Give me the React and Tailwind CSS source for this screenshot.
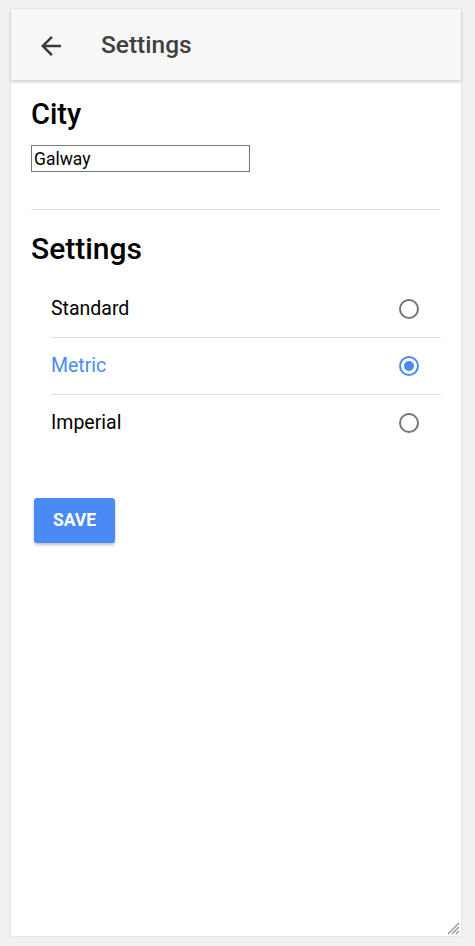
import { useState } from 'react'

const UNITS = ['Standard', 'Metric', 'Imperial']

function Radio({ checked }) {
  return (
    <span
      className={`flex h-[20px] w-[20px] items-center justify-center rounded-full border-2 ${
        checked ? 'border-[#4a8af4]' : 'border-[#757575]'
      }`}
    >
      {checked && <span className="h-[10px] w-[10px] rounded-full bg-[#4a8af4]" />}
    </span>
  )
}

export default function App() {
  const [city, setCity] = useState('Galway')
  const [unit, setUnit] = useState('Metric')

  return (
    <div className="min-h-[946px] bg-[#f1f1f3] pt-[9px] pl-[11px] font-['Roboto',sans-serif]">
      <div className="relative flex h-[927px] w-[450px] flex-col bg-white shadow-[0_0_2px_rgba(0,0,0,0.15)]">
        {/* Header */}
        <div className="flex h-[71px] items-center bg-[#f7f7f7] pt-[2px] shadow-[0_2px_3px_rgba(0,0,0,0.18)]">
          <button className="ml-[25px] flex h-[30px] w-[30px] items-center justify-center text-[#3a3a3a]">
            <svg width="30" height="30" viewBox="0 0 24 24" fill="currentColor">
              <path d="M20 11H7.83l5.59-5.59L12 4l-8 8 8 8 1.41-1.41L7.83 13H20v-2z" />
            </svg>
          </button>
          <h1 className="ml-[35px] text-[24.5px] font-medium text-[#404040]">Settings</h1>
        </div>

        <div className="px-[20px] pt-[16px]">
          <h2 className="text-[29px] leading-[36px] font-medium text-black">City</h2>
          <input
            value={city}
            onChange={e => setCity(e.target.value)}
            className="mt-[13px] h-[27px] w-[219px] border border-[#767676] px-[2px] text-[17.5px] text-black outline-none"
          />
          <div className="mt-[37px] mr-[1px] border-t border-[#e0e0e0]" />

          <h2 className="mt-[21px] text-[30px] leading-[36px] font-medium text-black">Settings</h2>

          <div className="mt-[13px] pl-[20px]">
            {UNITS.map((u, i) => (
              <div
                key={u}
                onClick={() => setUnit(u)}
                className={`flex h-[57px] cursor-pointer items-center justify-between pr-[22px] ${
                  i > 0 ? 'border-t border-[#e0e0e0]' : ''
                }`}
              >
                <span className={`text-[19.5px] ${unit === u ? 'text-[#4a8af4]' : 'text-black'}`}>{u}</span>
                <Radio checked={unit === u} />
              </div>
            ))}
          </div>

          <button className="mt-[47px] ml-[3px] h-[45px] w-[81px] rounded-[3px] bg-[#4a8af4] text-[17.5px] font-bold text-white shadow-[0_2px_3px_rgba(0,0,0,0.25)]">
            SAVE
          </button>
        </div>

        {/* resize handle */}
        <svg className="absolute right-[1px] bottom-[1px]" width="16" height="16" viewBox="0 0 16 16">
          <path d="M15 4L4 15M15 8L8 15M15 12L12 15" stroke="#8f8f8f" strokeWidth="1.2" />
        </svg>
      </div>
    </div>
  )
}
